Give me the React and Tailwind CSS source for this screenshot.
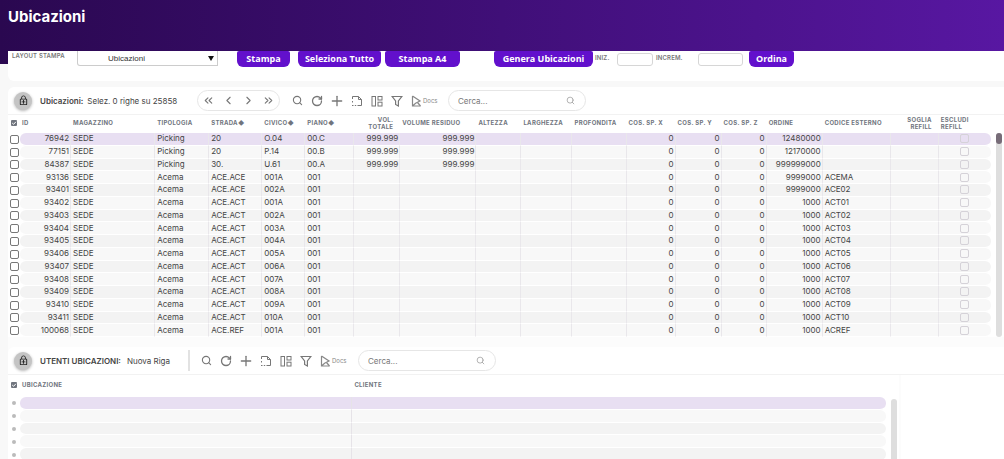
import React from "react";
import { Search, RotateCw, Plus, ChevronLeft, ChevronRight, ChevronsLeft, ChevronsRight } from "lucide-react";
import { MdOutlineEnhancedEncryption } from "react-icons/md";

const COLUMNS = [
  { label: "Id", col: "w-[51px]", num: true },
  { label: "Magazzino", col: "w-[84px]" },
  { label: "Tipologia", col: "w-[54px]" },
  { label: "Strada", col: "w-[53px]", sort: true },
  { label: "Civico", col: "w-[43px]", sort: true },
  { label: "Piano", col: "w-[49px]", sort: true },
  { label: "Vol. Totale", col: "w-[46px]", num: true, headRight: true },
  { label: "Volume Residuo", col: "w-[76px]", num: true },
  { label: "Altezza", col: "w-[45px]", num: true },
  { label: "Larghezza", col: "w-[51px]", num: true },
  { label: "Profondita", col: "w-[54px]", num: true },
  { label: "Cos. Sp. X", col: "w-[49px]", num: true },
  { label: "Cos. Sp. Y", col: "w-[46px]", num: true },
  { label: "Cos. Sp. Z", col: "w-[45px]", num: true },
  { label: "Ordine", col: "w-[56px]", num: true },
  { label: "Codice Esterno", col: "w-[68px]" },
  { label: "Soglia Refill", col: "w-[48px]", num: true, headRight: true },
];

const ROWS = [
  ["76942", "Picking", "20", "O.04", "00.C", "999.999", "12480000", ""],
  ["77151", "Picking", "20", "P.14", "00.B", "999.999", "12170000", ""],
  ["84387", "Picking", "30.", "U.61", "00.A", "999.999", "999999000", ""],
  ["93136", "Acema", "ACE.ACE", "001A", "001", "", "9999000", "ACEMA"],
  ["93401", "Acema", "ACE.ACE", "002A", "001", "", "9999000", "ACE02"],
  ["93402", "Acema", "ACE.ACT", "001A", "001", "", "1000", "ACT01"],
  ["93403", "Acema", "ACE.ACT", "002A", "001", "", "1000", "ACT02"],
  ["93404", "Acema", "ACE.ACT", "003A", "001", "", "1000", "ACT03"],
  ["93405", "Acema", "ACE.ACT", "004A", "001", "", "1000", "ACT04"],
  ["93406", "Acema", "ACE.ACT", "005A", "001", "", "1000", "ACT05"],
  ["93407", "Acema", "ACE.ACT", "006A", "001", "", "1000", "ACT06"],
  ["93408", "Acema", "ACE.ACT", "007A", "001", "", "1000", "ACT07"],
  ["93409", "Acema", "ACE.ACT", "008A", "001", "", "1000", "ACT08"],
  ["93410", "Acema", "ACE.ACT", "009A", "001", "", "1000", "ACT09"],
  ["93411", "Acema", "ACE.ACT", "010A", "001", "", "1000", "ACT10"],
  ["100068", "Acema", "ACE.REF", "001A", "001", "", "1000", "ACREF"],
].map(([id, tipo, strada, civico, piano, vol, ordine, codice]) => ({
  id,
  cells: [id, "SEDE", tipo, strada, civico, piano, vol, vol, "", "", "", "0", "0", "0", ordine, codice, ""],
}));

function rowColor(i) {
  if (i === 0) return "bg-[#e8dff2]";
  return i % 2 ? "bg-[#f8f8f8]" : "bg-[#f3f3f3]";
}

function LayoutIcon() {
  return (
    <svg viewBox="0 0 12 12" className="size-3" fill="none" stroke="currentColor" aria-hidden="true">
      <rect x="1" y="1.5" width="3.5" height="9.5" />
      <rect x="7" y="1.5" width="4" height="3.5" />
      <rect x="7" y="7.2" width="4" height="3.8" />
    </svg>
  );
}

function PageIcon() {
  return (
    <svg viewBox="0 0 12 12" className="size-3" fill="none" stroke="currentColor" aria-hidden="true">
      <path d="M1.5 4V1.5H7.5L10.5 4.5V10.5H6.5M7.5 1.5V4.5H10.5" />
      <path d="M1.5 6V7.5M1 10.5H2.5M3.8 10.5H5.2" />
    </svg>
  );
}

function FilterIcon() {
  return (
    <svg viewBox="0 0 12 12" className="size-3" fill="none" stroke="currentColor" strokeWidth="1.2" aria-hidden="true">
      <path d="M1.2 1.5H10.8L7.4 6V11L4.6 9.5V6Z" />
    </svg>
  );
}

function DocsIcon() {
  return (
    <svg viewBox="0 0 12 12" className="size-3" fill="none" stroke="currentColor" strokeWidth="1.2" aria-hidden="true">
      <path d="M1.5 1V11H9.5M1.5 1L9 6L4.6 8.2L1.5 11" />
      <path d="M6.5 7.5L9.5 11" />
    </svg>
  );
}

function LockBadge() {
  return (
    <button type="button" aria-label="Blocca" className="flex size-[18px] shrink-0 items-center justify-center rounded-full bg-[#c4c4c4] text-[#222] shadow-[0_1px_3px_rgba(0,0,0,0.3)]">
      <MdOutlineEnhancedEncryption className="size-[11px]" />
    </button>
  );
}

function ToolIcons() {
  const tools = [
    ["Cerca", <Search className="size-[11px]" strokeWidth={2.4} />],
    ["Aggiorna", <RotateCw className="size-3" strokeWidth={2.6} />],
    ["Aggiungi", <Plus className="size-4" strokeWidth={2} />],
    ["Nuovo documento", <PageIcon />],
    ["Disposizione", <LayoutIcon />],
    ["Filtra", <FilterIcon />],
  ];
  return (
    <div className="flex items-center gap-[4px] pl-px text-[#777]">
      {tools.map(([name, icon]) => (
        <button key={name} type="button" aria-label={name} className="flex size-4 items-center justify-center">
          {icon}
        </button>
      ))}
      <button type="button" className="flex items-center pl-[2px] text-[6px] leading-3 text-[#888]">
        <DocsIcon />
        Docs
      </button>
    </div>
  );
}

function SearchBox({ label }) {
  return (
    <div className="flex h-[21px] w-[138px] items-center rounded-full border border-[#e6e6e6] pr-[10px] pl-[9px]">
      <input type="text" aria-label={label} placeholder="Cerca..." className="h-4 min-w-0 flex-1 text-[8px] leading-4 outline-none placeholder:text-[#777]" />
      <Search className="size-[9px] text-[#999]" strokeWidth={2} aria-hidden="true" />
    </div>
  );
}

function SelectAll({ label }) {
  return (
    <span className="relative ml-[3px] block size-[6px]">
      <input type="checkbox" defaultChecked aria-label={label} className="block size-[6px] appearance-none rounded-[1px] bg-[#70757e]" />
      <svg viewBox="0 0 6 6" className="pointer-events-none absolute inset-0 size-[6px]" fill="none" stroke="white" aria-hidden="true">
        <path d="M1.2 3L2.6 4.3L4.9 1.8" />
      </svg>
    </span>
  );
}

const HEAD = "p-0 pl-[2px] text-left align-middle text-[6px] leading-[7px] font-bold tracking-wider text-[#70757e] uppercase";
const ACTION = "h-4 rounded-t-xs rounded-b-md bg-[#6210cc] text-center font-['Open_Sans',sans-serif] text-[9px] leading-[14px] font-bold whitespace-nowrap text-white";
const FIELD_LABEL = "text-[6px] leading-[8px] font-semibold tracking-wide text-[#777] uppercase";
const FIELD = "mt-[2px] h-[13px] rounded-[3px] border border-[#d6d6d6] px-1 text-[8px]";

export default function App() {
  return (
    <div className="flex h-screen flex-col overflow-hidden bg-[#f8f8f8] font-[Inter,'Liberation_Sans',sans-serif] text-[#444]">
      <header className="h-16 shrink-0 bg-linear-to-r from-[#2a0850] via-[#400f78] to-[#5817a2] px-2 pt-1">
        <h1 className="text-[15px] leading-[26px] font-bold text-white">Ubicazioni</h1>
      </header>

      <form className="-mt-[13px] ml-2 flex h-[30px] shrink-0 items-start rounded-bl-md bg-white pl-1">
        <label htmlFor="layout" className={`w-[65px] pt-px ${FIELD_LABEL}`}>Layout stampa</label>
        <div className="relative mr-[19px] w-[141px]">
          <select id="layout" className="block h-[15px] w-full appearance-none rounded-bl-[3px] border border-t-0 border-[#ccc] pt-px pl-[30px] font-['Liberation_Sans',sans-serif] text-[8px] leading-[13px] text-[#333]">
            <option>Ubicazioni</option>
          </select>
          <svg viewBox="0 0 6 5" className="pointer-events-none absolute top-[5px] right-1 h-[5px] w-[6px]" aria-hidden="true">
            <path d="M0 0H6L3 5Z" fill="#111" />
          </svg>
        </div>
        <button type="button" className={`mr-2 w-[53px] ${ACTION}`}>Stampa</button>
        <button type="button" className={`mr-1 w-[83px] ${ACTION}`}>Seleziona Tutto</button>
        <button type="button" className={`mr-[34px] w-[75px] ${ACTION}`}>Stampa A4</button>
        <button type="button" className={`mr-[2px] w-[99px] ${ACTION}`}>Genera Ubicazioni</button>
        <label htmlFor="iniz" className={`w-[22px] pt-[3px] ${FIELD_LABEL}`}>Iniz.</label>
        <input id="iniz" type="text" className={`mr-[3px] w-9 ${FIELD}`} />
        <label htmlFor="increm" className={`w-[42px] pt-[3px] ${FIELD_LABEL}`}>Increm.</label>
        <input id="increm" type="text" className={`mr-[6px] w-[45px] ${FIELD}`} />
        <button type="button" className={`w-[45px] ${ACTION}`}>Ordina</button>
      </form>

      <section className="mt-[6px] ml-2 shrink-0 rounded-tl-md bg-white">
        <div className="flex h-7 items-center border-b border-[#f2f2f2] pl-[6px]">
          <LockBadge />
          <h2 className="ml-2 flex w-[157px] gap-1 text-[8px] leading-3 whitespace-nowrap">
            <span className="font-semibold">Ubicazioni:</span>
            <span>Selez. 0 righe su 25858</span>
          </h2>
          <nav aria-label="Pagine" className="mr-2 flex h-[21px] w-[83px] items-center justify-between rounded-full border border-[#e6e6e6] px-1 text-[#777]">
            <button type="button" aria-label="Prima pagina"><ChevronsLeft className="size-[13px]" /></button>
            <button type="button" aria-label="Pagina precedente"><ChevronLeft className="size-[13px]" /></button>
            <button type="button" aria-label="Pagina successiva"><ChevronRight className="size-[13px]" /></button>
            <button type="button" aria-label="Ultima pagina"><ChevronsRight className="size-[13px]" /></button>
          </nav>
          <div className="w-[160px]"><ToolIcons /></div>
          <SearchBox label="Cerca ubicazioni" />
        </div>
        <div className="flex">
          <table className="h-[222px] min-w-0 flex-1 table-fixed border-separate border-spacing-0 text-[8px] leading-[11px]">
            <colgroup>
              <col className="w-3" />
              {COLUMNS.map((c) => <col key={c.label} className={c.col} />)}
              <col className="w-[52px]" />
            </colgroup>
            <thead>
              <tr className="h-[18px]">
                <th className="p-0 pb-[3px]"><SelectAll label="Seleziona tutte le ubicazioni" /></th>
                {COLUMNS.map((c) => (
                  <th key={c.label} className={`${HEAD} pb-[3px] ${c.headRight ? "pr-[7px] text-right!" : "whitespace-nowrap"}`}>
                    {c.label}{c.sort && <span className="tracking-normal">◆</span>}
                  </th>
                ))}
                <th className={`${HEAD} pb-[3px]`}>Escludi<br />Refill</th>
              </tr>
            </thead>
            <tbody>
              {ROWS.map((row, r) => (
                <tr key={row.id}>
                  <td className="p-0">
                    <input type="checkbox" aria-label={`Seleziona ${row.id}`} className="ml-[2px] block size-[9px] appearance-none rounded-[2px] border border-[#777] bg-white" />
                  </td>
                  {row.cells.map((value, c) => (
                    <td
                      key={c}
                      className={`border-r border-b border-r-[#e9e7eb] border-b-white p-0 whitespace-nowrap ${rowColor(r)} ${COLUMNS[c].num ? "pr-px text-right" : "pl-[2px]"} ${c === 0 ? "rounded-l-md" : ""}`}
                    >
                      {value}
                    </td>
                  ))}
                  <td className={`rounded-r-md border-b border-white p-0 ${rowColor(r)}`}>
                    <input type="checkbox" disabled aria-label={`Escludi refill ${row.id}`} className="mx-auto block size-[9px] appearance-none rounded-[2px] border border-[#d5d2d8]" />
                  </td>
                </tr>
              ))}
            </tbody>
          </table>
          <div className="mt-[18px] mr-[2px] ml-[5px] w-[6px] rounded-full bg-[#dedede]">
            <div className="h-[11px] rounded-full bg-[#776c78]" />
          </div>
        </div>
      </section>

      <section className="ml-2 flex min-h-0 flex-1 flex-col bg-[#fcfcfc] pt-[10px]">
        <div className="flex h-7 shrink-0 items-center rounded-tl-md border-b border-[#f2f2f2] bg-white pl-[6px]">
          <LockBadge />
          <h2 className="ml-2 flex w-[148px] gap-[6px] text-[8px] leading-3 whitespace-nowrap">
            <span className="font-semibold">UTENTI UBICAZIONI:</span>
            <span>Nuova Riga</span>
          </h2>
          <div className="mr-[7px] h-[21px] border-l-2 border-[#e2e2e2]" />
          <div className="w-[161px]"><ToolIcons /></div>
          <SearchBox label="Cerca utenti" />
        </div>
        <div className="flex min-h-0 flex-1">
          <div className="flex min-w-0 flex-1 overflow-hidden bg-white">
            <table className="h-[86px] min-w-0 flex-1 table-fixed border-separate border-spacing-0">
              <colgroup>
                <col className="w-3" />
                <col className="w-[332px]" />
                <col className="w-[533px]" />
              </colgroup>
              <thead>
                <tr className="h-[22px]">
                  <th className="p-0 pb-[3px]"><SelectAll label="Seleziona tutti gli utenti" /></th>
                  <th className={`${HEAD} pb-[3px]`}>Ubicazione</th>
                  <th className={`${HEAD} pb-[3px]`}>Cliente</th>
                </tr>
              </thead>
              <tbody>
                {[0, 1, 2, 3, 4].map((r) => (
                  <tr key={r}>
                    <td className="p-0"><div className="ml-1 size-1 rounded-full bg-[#bbb]" /></td>
                    <td className={`rounded-l-md border-r border-b border-r-[#e6e3e8] border-b-white p-0 ${rowColor(r)}`} />
                    <td className={`rounded-r-md border-b border-white p-0 ${rowColor(r)}`} />
                  </tr>
                ))}
              </tbody>
            </table>
            <div className="mt-6 mr-[2px] ml-[5px] w-[6px] rounded-t-full bg-[#dedede]" />
          </div>
          <div className="ml-[2px] w-[103px] shrink-0 bg-white" />
        </div>
      </section>
    </div>
  );
}
